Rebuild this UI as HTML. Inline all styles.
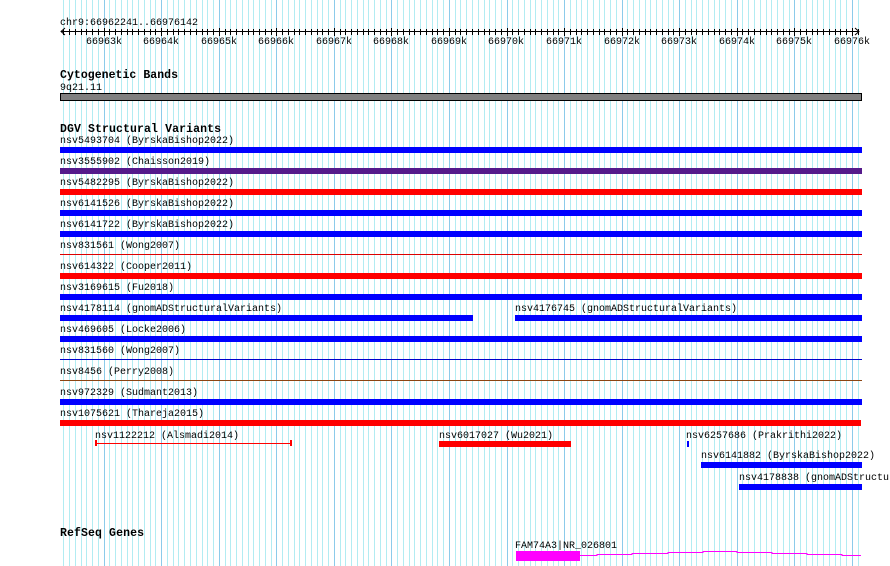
<!DOCTYPE html>
<html><head><meta charset="utf-8"><style>
html,body{margin:0;padding:0;background:#fff;width:890px;height:566px;overflow:hidden}
svg{display:block}
text{font-family:"Liberation Mono",monospace;font-size:10px;fill:#000}
.b{font-weight:bold;font-size:11.5px}
</style></head><body>
<svg id="s" width="890" height="566" viewBox="0 0 890 566" xmlns="http://www.w3.org/2000/svg">
<g id="grid"></g>

<text x="60" y="25">chr9:66962241..66976142</text>
<line x1="61" y1="31.5" x2="859" y2="31.5" stroke="#000"/>
<g id="ticks"></g>
<path d="M65 28 L61 31.5 L65 35 M855 28 L859 31.5 L855 35" stroke="#000" fill="none"/>
<g>
<text x="86" y="44">66963k</text><text x="143" y="44">66964k</text><text x="201" y="44">66965k</text>
<text x="258" y="44">66966k</text><text x="316" y="44">66967k</text><text x="373" y="44">66968k</text>
<text x="431" y="44">66969k</text><text x="488" y="44">66970k</text><text x="546" y="44">66971k</text>
<text x="604" y="44">66972k</text><text x="661" y="44">66973k</text><text x="719" y="44">66974k</text>
<text x="776" y="44">66975k</text><text x="834" y="44">66976k</text>
</g>

<text class="b" x="60" y="78" textLength="118">Cytogenetic Bands</text>
<text x="60" y="90">9q21.11</text>
<rect x="60.5" y="93.5" width="801" height="7" fill="#808080" stroke="#000"/>

<text class="b" x="60" y="132" textLength="161">DGV Structural Variants</text>

<text x="60" y="143">nsv5493704 (ByrskaBishop2022)</text><rect x="60" y="147" width="802" height="6" fill="#0000ff"/>
<text x="60" y="164">nsv3555902 (Chaisson2019)</text><rect x="60" y="168" width="802" height="6" fill="#551a8b"/>
<text x="60" y="185">nsv5482295 (ByrskaBishop2022)</text><rect x="60" y="189" width="802" height="6" fill="#ff0000"/>
<text x="60" y="206">nsv6141526 (ByrskaBishop2022)</text><rect x="60" y="210" width="802" height="6" fill="#0000ff"/>
<text x="60" y="227">nsv6141722 (ByrskaBishop2022)</text><rect x="60" y="231" width="802" height="6" fill="#0000ff"/>
<text x="60" y="248">nsv831561 (Wong2007)</text><rect x="60" y="254" width="802" height="1" fill="#dd0000"/>
<text x="60" y="269">nsv614322 (Cooper2011)</text><rect x="60" y="273" width="802" height="6" fill="#ff0000"/>
<text x="60" y="290">nsv3169615 (Fu2018)</text><rect x="60" y="294" width="802" height="6" fill="#0000ff"/>
<text x="60" y="311">nsv4178114 (gnomADStructuralVariants)</text><rect x="60" y="315" width="413" height="6" fill="#0000ff"/>
<text x="515" y="311">nsv4176745 (gnomADStructuralVariants)</text><rect x="515" y="315" width="347" height="6" fill="#0000ff"/>
<text x="60" y="332">nsv469605 (Locke2006)</text><rect x="60" y="336" width="802" height="6" fill="#0000ff"/>
<text x="60" y="353">nsv831560 (Wong2007)</text><rect x="60" y="359" width="802" height="1" fill="#0000cc"/>
<text x="60" y="374">nsv8456 (Perry2008)</text><rect x="60" y="380" width="802" height="1" fill="#8b4513"/>
<text x="60" y="395">nsv972329 (Sudmant2013)</text><rect x="60" y="399" width="802" height="6" fill="#0000ff"/>
<text x="60" y="416">nsv1075621 (Thareja2015)</text><rect x="60" y="420" width="801" height="6" fill="#ff0000"/>

<text x="95" y="438">nsv1122212 (Alsmadi2014)</text>
<rect x="96" y="443" width="195" height="1" fill="#ff0000"/>
<rect x="95" y="440" width="2" height="6" fill="#ff0000"/><rect x="290" y="440" width="2" height="6" fill="#ff0000"/>
<text x="439" y="438">nsv6017027 (Wu2021)</text><rect x="439" y="441" width="132" height="6" fill="#ff0000"/>
<text x="686" y="438">nsv6257686 (Prakrithi2022)</text><rect x="687" y="441" width="2" height="6" fill="#0000ff"/>
<text x="701" y="458">nsv6141882 (ByrskaBishop2022)</text><rect x="701" y="462" width="161" height="6" fill="#0000ff"/>
<text x="739" y="480">nsv4178838 (gnomADStructuralVariants)</text><rect x="739" y="484" width="123" height="6" fill="#0000ff"/>

<text class="b" x="60" y="536" textLength="84">RefSeq Genes</text>
<text x="515" y="548">FAM74A3|NR_026801</text>
<rect x="516" y="551" width="64" height="10" fill="#ff00ff"/>
<path d="M580 555.5 H597 V554.5 H632 V553.5 H668 V552.5 H703 V551.5 H737 V552.5 H772 V553.5 H807 V554.5 H842 V555.5 H861" stroke="#ff00ff" fill="none"/>
</svg>
<script>
(function(){
var ns="http://www.w3.org/2000/svg",g=document.getElementById("grid"),t=document.getElementById("ticks");
function r(p,x,y,w,h,c){var e=document.createElementNS(ns,"rect");e.setAttribute("x",x);e.setAttribute("y",y);e.setAttribute("width",w);e.setAttribute("height",h);e.setAttribute("fill",c);p.appendChild(e);}
var s=66962241,bp=13901/800;
for(var p=66962300;p<=66976142;p+=100){
 var x=Math.round(60+(p-s)/bp);
 if(x>861)break;
 var maj=(p%1000===0);
 r(g,x,0,1,566,maj?"#8ccbea":"#b2ecf2");
 if(maj) r(t,x,28,1,8,"#000"); else r(t,x,29,1,6,"#000");
}
})();
</script>
</body></html>
